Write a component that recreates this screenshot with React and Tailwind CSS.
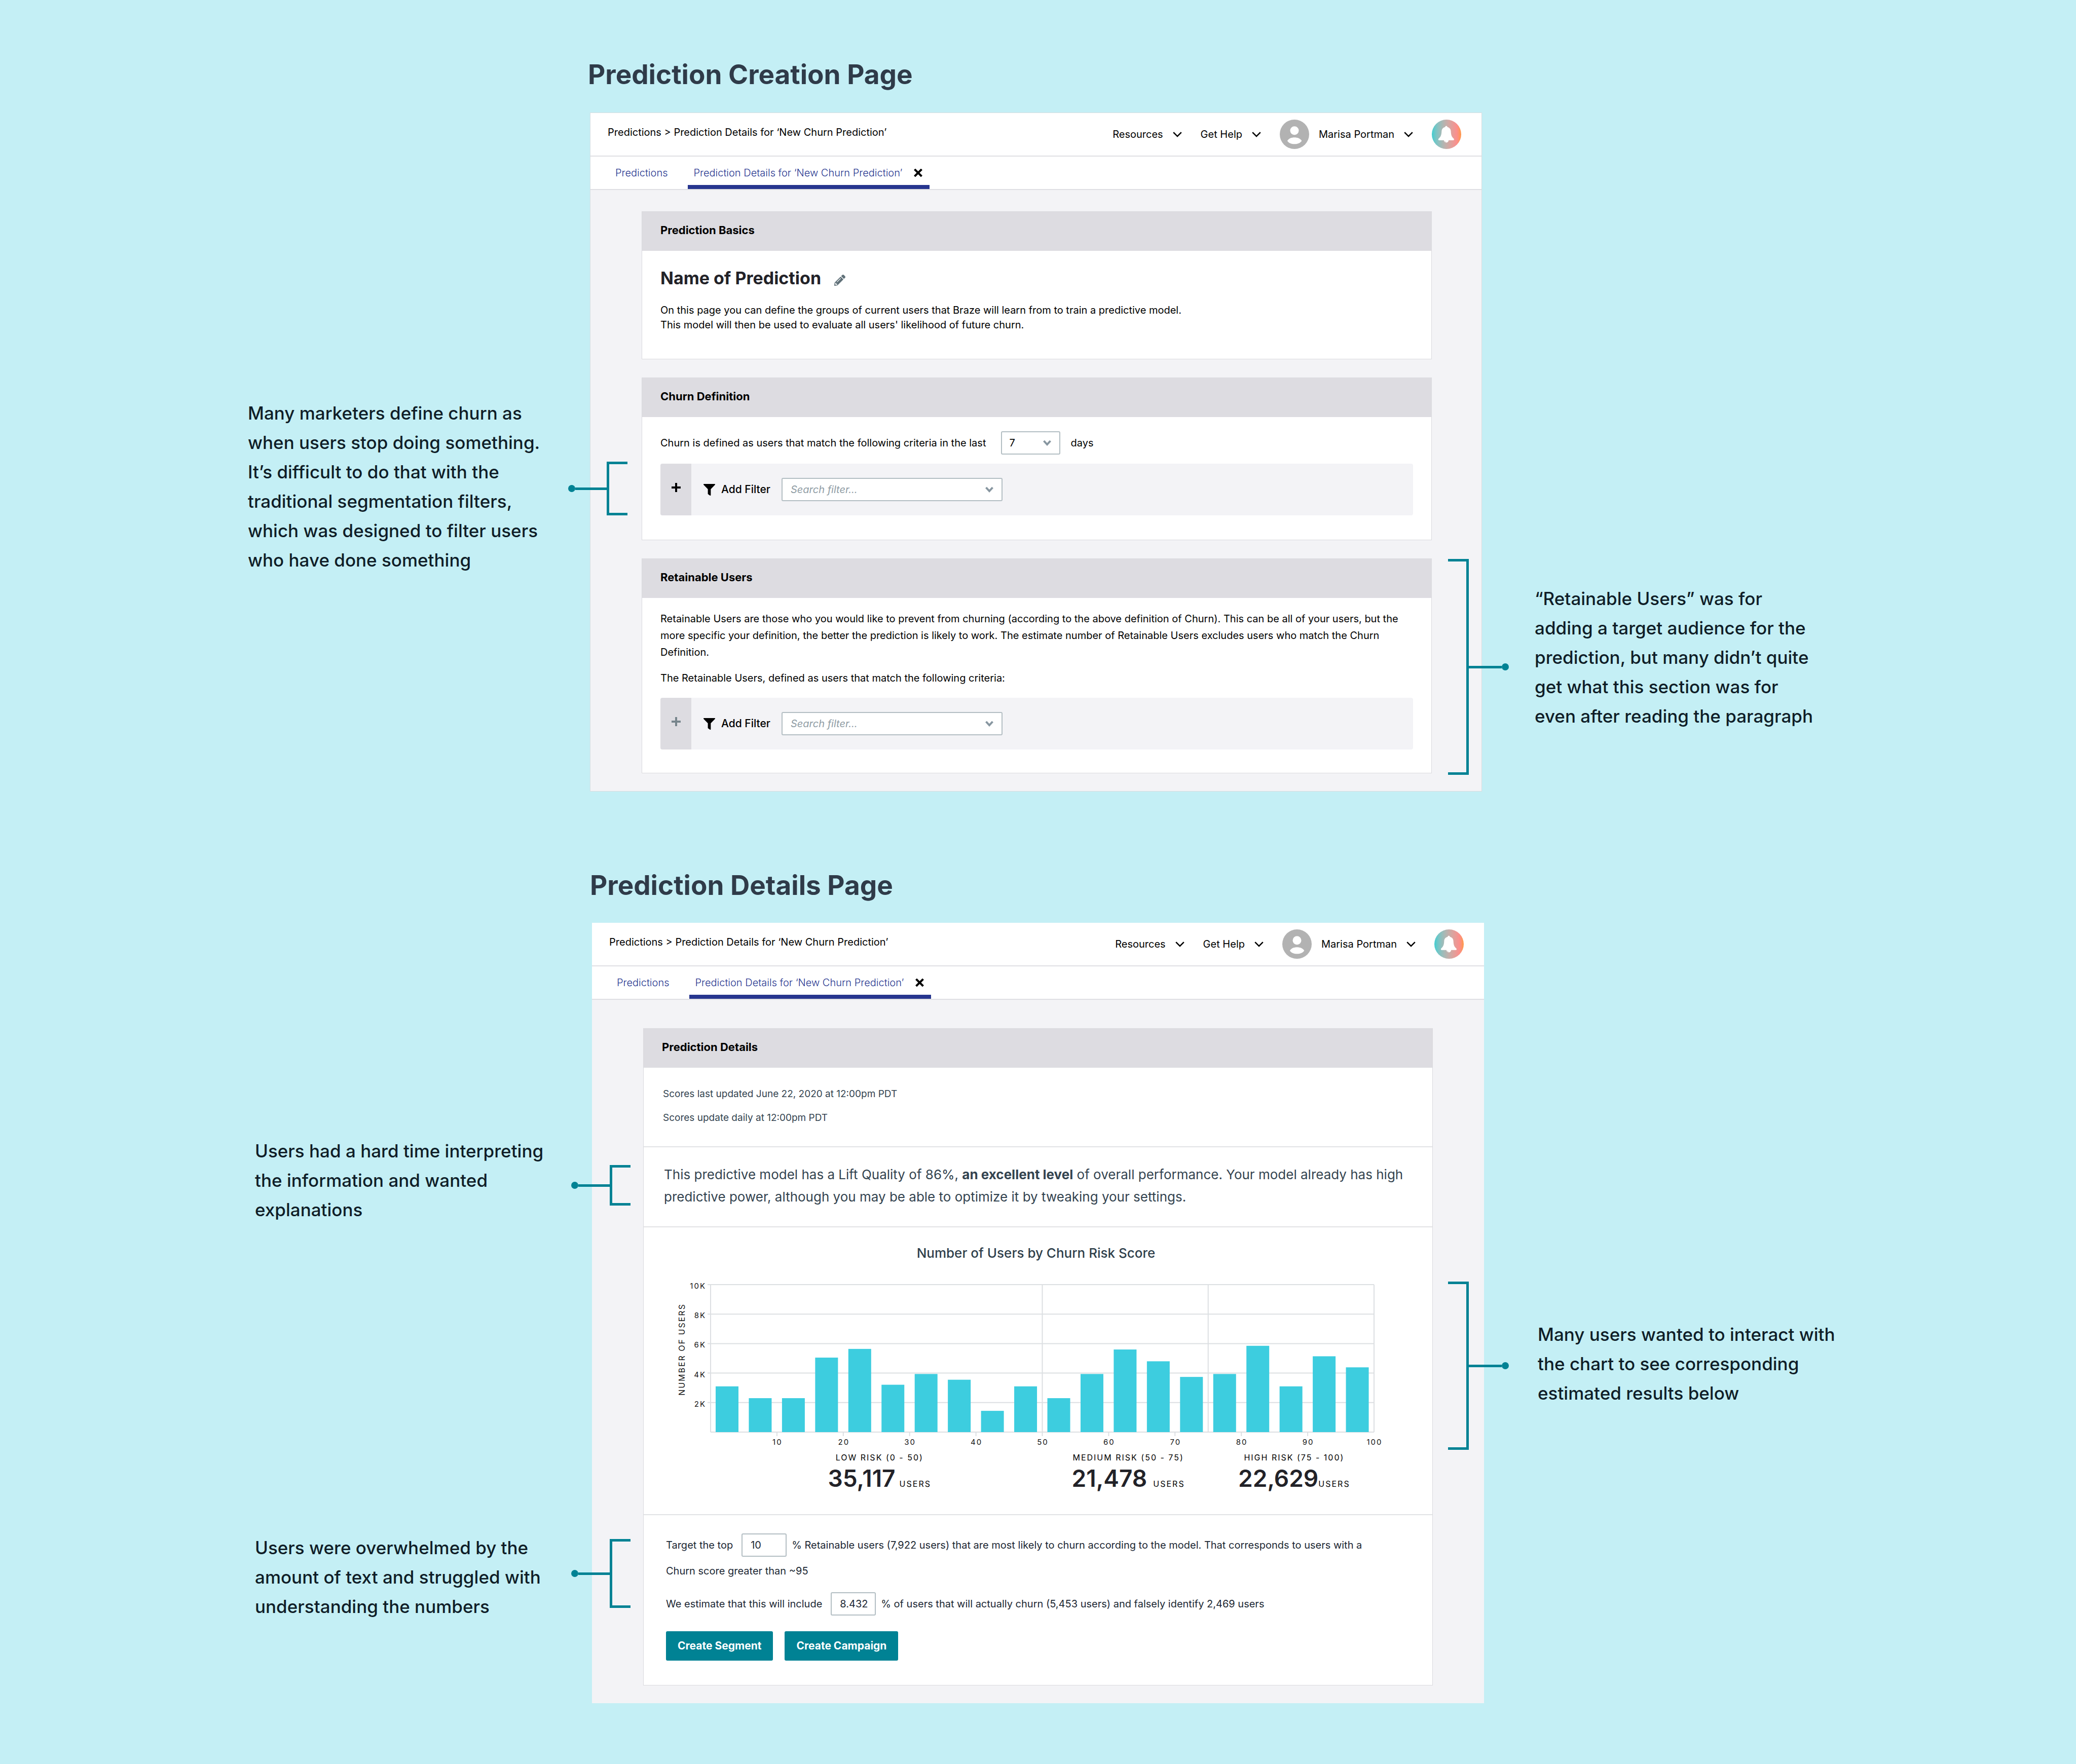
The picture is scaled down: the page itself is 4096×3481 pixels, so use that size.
import React from "react";
import { FaFilter, FaPencilAlt } from "react-icons/fa";

function ThinChevron() {
  return (
    <svg viewBox="0 0 18 11" className="w-[18px] h-[11px]" fill="none" stroke="#000" strokeWidth="2.6" aria-hidden="true">
      <path d="M1.2 1.2 9 9 16.8 1.2" />
    </svg>
  );
}

function FieldChevron() {
  return (
    <svg viewBox="0 0 16 12" className="w-4 h-3" fill="none" stroke="#8796a0" strokeWidth="4" aria-hidden="true">
      <path d="M1.5 2 8 9 14.5 2" />
    </svg>
  );
}

function Avatar() {
  return (
    <svg viewBox="0 0 60 60" className="w-[58px] h-[58px]" aria-hidden="true">
      <circle cx="30" cy="30" r="30" fill="#b2b2b2" />
      <circle cx="30" cy="22.5" r="8.8" fill="#fff" />
      <path fill="#fff" d="M15.5 43.5C18 38.5 24 36.5 30 36.5s12 2 14.8 7C42 48 36 50 30 50s-12-2-14.5-6.500z" />
    </svg>
  );
}

function BellIcon() {
  return (
    <svg viewBox="0 0 60 60" className="w-[58px] h-[58px] rounded-full bg-linear-to-r from-[#3acdd0] via-[#fb8e8c] via-85% to-[#ff9740]" aria-hidden="true">
      <path
        fill="#fff"
        d="M29.500 13c1.400 0 2.300 1 2.300 2.200 4.800 1 6.900 4.300 7.100 9 .3 7 1.600 11 5.800 14.500 1.300 1.200.8 3.500-1 3.500H34.300a4.800 4.800 0 0 1-9.600 0H15c-1.800 0-2.300-2.300-1-3.500 4.200-3.500 5.700-7.500 6-14.500.2-4.700 2.400-8 7.200-9 0-1.200.9-2.200 2.300-2.200z"
      />
      <path d="M26.500 43.500a3.200 3.200 0 0 0 3 3" fill="none" stroke="#c9b5b5" strokeWidth="0.7" />
    </svg>
  );
}

function Bracket({ side, className }) {
  const left = side === "left";
  return (
    <div
      aria-hidden="true"
      className={`absolute w-[41px] border-y-[5px] border-[#008294] ${left ? "border-l-[5px]" : "border-r-[5px]"} ${className}`}
    >
      <div
        className={`absolute top-1/2 flex -translate-y-1/2 items-center ${left ? "right-full w-[81px]" : "left-full w-[84px] flex-row-reverse"}`}
      >
        <span className="h-[14px] w-[14px] rounded-full bg-[#008294]" />
        <span className="h-[5px] flex-1 bg-[#008294]" />
      </div>
    </div>
  );
}

function Note({ children }) {
  return <p className="whitespace-pre-line text-[35px] font-medium leading-[58px] text-[#0f1d27]">{children}</p>;
}

function TopBar() {
  return (
    <header>
      <div className="flex h-[86px] items-center justify-between border-b-2 border-[#dfdfe3] bg-white pl-[34px] pr-10">
        <nav aria-label="Breadcrumb" className="pb-2">
          Predictions &gt; Prediction Details for ‘New Churn Prediction’
        </nav>
        <div className="flex items-center gap-[37px]">
          <button type="button" className="flex items-center gap-[19px]">
            Resources <ThinChevron />
          </button>
          <button type="button" className="flex items-center gap-[19px]">
            Get Help <ThinChevron />
          </button>
          <button type="button" className="flex items-center gap-[19px]">
            <Avatar />
            Marisa Portman <ThinChevron />
          </button>
          <button type="button" aria-label="Notifications">
            <BellIcon />
          </button>
        </div>
      </div>
      <div className="flex h-[66px] items-stretch gap-10 border-b-2 border-[#dfdfe3] bg-white pl-[49px] font-light text-[#27368f]">
        <a href="#predictions" className="flex items-center">Predictions</a>
        <div className="flex items-center gap-[23px] pl-[11px] pr-[14px] shadow-[inset_0_-8px_0_#27368f]">
          <a href="#details">Prediction Details for ‘New Churn Prediction’</a>
          <button type="button" aria-label="Close tab">
            <svg viewBox="0 0 17 16" className="h-4 w-[17px]" stroke="#000" strokeWidth="4" fill="none">
              <path d="M1.500 1 15.500 15M15.500 1 1.500 15" />
            </svg>
          </button>
        </div>
      </div>
    </header>
  );
}

function Card({ title, children }) {
  return (
    <section className="relative border border-[#dadade] bg-white">
      <h3 className="flex h-[77px] items-center bg-[#dddce1] px-9 pb-[6px] text-[22px] font-bold">{title}</h3>
      {children}
    </section>
  );
}

function FilterRow({ muted, children }) {
  return (
    <div className="relative flex h-[102px] items-center rounded bg-[#f3f3f6]">
      <button
        type="button"
        aria-label="Add filter group"
        className="flex h-full w-[61px] items-center justify-center rounded-l bg-[#dddce1] pb-2"
      >
        <svg viewBox="0 0 18 18" className="h-[18px] w-[18px]" stroke={muted ? "#77858c" : "#000"} strokeWidth="4">
          <path d="M9 0v18M0 9h18" />
        </svg>
      </button>
      <label className="flex items-center">
        <FaFilter className="ml-6 h-[23px] w-[23px]" />
        <span className="ml-3 mr-[22px] text-[21px] font-medium">Add Filter</span>
        <span className="flex h-[46px] w-[436px] items-center rounded-[3px] border-2 border-[#b3bec3] bg-white pl-4 pr-4">
          <input
            type="text"
            placeholder="Search filter..."
            className="min-w-0 flex-1 italic outline-none placeholder:text-[#8f9ca4]"
          />
          <FieldChevron />
        </span>
      </label>
      {children}
    </div>
  );
}

const BARS = [3.1, 2.3, 2.3, 5.05, 5.64, 3.21, 3.94, 3.55, 1.44, 3.1, 2.3, 3.94, 5.6, 4.8, 3.74, 3.94, 5.85, 3.1, 5.14, 4.39];
const PLOT = { x: 132, y: 15, w: 1309, h: 291 };

function Chart() {
  const right = PLOT.x + PLOT.w;
  const bottom = PLOT.y + PLOT.h;
  return (
    <svg viewBox="0 0 1556 336" className="mt-[27px] block w-full" role="img" aria-label="Number of users by churn risk score">
      <g stroke="#dcdfe2" strokeWidth="2">
        {[0, 2, 4, 6, 8, 10].map((k) => (
          <line key={k} x1={k ? PLOT.x - 6 : PLOT.x} x2={right} y1={bottom - k * 29.1} y2={bottom - k * 29.1} />
        ))}
        {[0, 50, 75, 100].map((v) => (
          <line key={v} x1={PLOT.x + v * 13.09} x2={PLOT.x + v * 13.09} y1={PLOT.y} y2={bottom} />
        ))}
        {[10, 20, 30, 40, 50, 60, 70, 80, 90].map((v) => (
          <line key={v} x1={PLOT.x + v * 13.09} x2={PLOT.x + v * 13.09} y1={bottom} y2={bottom + 8} />
        ))}
      </g>
      {BARS.map((v, i) => (
        <rect key={i} x={PLOT.x + 10 + i * 65.45} y={bottom - v * 29.1} width="45" height={v * 29.1} fill="#3dcddf" />
      ))}
      <g fontSize="15" letterSpacing="2" fill="#111">
        {[2, 4, 6, 8, 10].map((k) => (
          <text key={k} x={PLOT.x - 9} y={bottom - k * 29.1 + 8} textAnchor="end">{k}K</text>
        ))}
        {[10, 20, 30, 40, 50, 60, 70, 80, 90, 100].map((v) => (
          <text key={v} x={PLOT.x + v * 13.09 + 1} y={bottom + 25} textAnchor="middle">{v}</text>
        ))}
      </g>
      <text transform="translate(81 143) rotate(-90)" fontSize="16" letterSpacing="2" textAnchor="middle" fill="#111">
        NUMBER OF USERS
      </text>
    </svg>
  );
}

function Risk({ label, value, gap }) {
  return (
    <div className="flex flex-col items-center pl-3">
      <div className="text-[16px] leading-6 tracking-[2px]">{label}</div>
      <div className={`mt-[6px] flex items-baseline ${gap}`}>
        <span className="text-[46px] font-semibold leading-[46px] text-[#222228]">{value}</span>
        <span className="text-[16px] leading-6 tracking-[2px]">USERS</span>
      </div>
    </div>
  );
}

const numberInput = "ml-[17px] mr-[10px] h-[46px] w-[89px] rounded-[3px] border-2 border-[#b3bec3] bg-white pl-4";
const action = "h-[58px] rounded-[3px] bg-[#008294] px-[23px] text-[21px] font-bold text-white";

function CreationPage() {
  return (
    <div>
      <h2 className="-ml-1 text-[53px] font-bold leading-[64px] text-[#2f3b49]">Prediction Creation Page</h2>
      <article className="mt-[43px] border border-[#d8dde0] bg-[#f3f3f6]">
        <TopBar />
        <div className="flex flex-col gap-9 pb-[35px] pl-[101px] pr-[98px] pt-[42px]">
          <Card title="Prediction Basics">
            <div className="px-9 pb-[52px] pt-[34px]">
              <div className="flex items-center gap-[26px]">
                <h4 className="text-[34px] font-bold leading-10 text-[#222228]">Name of Prediction</h4>
                <button type="button" aria-label="Edit name" className="pt-2">
                  <FaPencilAlt className="h-[22px] w-[22px] text-[#5f7078]" />
                </button>
              </div>
              <p className="mt-[29px] leading-[29px]">
                On this page you can define the groups of current users that Braze will learn from to train a predictive model.
                <br />
                This model will then be used to evaluate all users' likelihood of future churn.
              </p>
            </div>
          </Card>
          <Card title="Churn Definition">
            <div className="px-9 pb-12 pt-7">
              <label className="mb-[18px] flex items-center">
                Churn is defined as users that match the following criteria in the last
                <span className="relative ml-[30px] mr-5 flex items-center">
                  <select defaultValue="7" className="h-[46px] w-[117px] appearance-none rounded-[3px] border-2 border-[#b3bec3] bg-white pl-[14px]">
                    <option>7</option>
                    <option>14</option>
                    <option>30</option>
                  </select>
                  <span className="pointer-events-none absolute right-[18px]"><FieldChevron /></span>
                </span>
                days
              </label>
              <FilterRow>
                <Bracket side="left" className="-top-1 bottom-0 right-full mr-[65px]" />
              </FilterRow>
            </div>
          </Card>
          <Card title="Retainable Users">
            <div className="px-9 pb-[46px] pt-[25px]">
              <p className="leading-[33px]">
                Retainable Users are those who you would like to prevent from churning (according to the above definition of
                Churn). This can be all of your users, but the more specific your definition, the better the prediction is
                likely to work. The estimate number of Retainable Users excludes users who match the Churn Definition.
              </p>
              <p className="mb-[22px] mt-[18px] leading-[33px]">
                The Retainable Users, defined as users that match the following criteria:
              </p>
              <FilterRow muted />
            </div>
            <Bracket side="right" className="-bottom-1 left-full top-0 ml-[33px]" />
          </Card>
        </div>
      </article>
    </div>
  );
}

function DetailsPage() {
  return (
    <div>
      <h2 className="-ml-1 text-[53px] font-bold leading-[64px] text-[#2f3b49]">Prediction Details Page</h2>
      <article className="mt-[42px] bg-[#f3f3f6]">
        <TopBar />
        <div className="px-[101px] pb-[35px] pt-14">
          <Card title="Prediction Details">
            <div className="border-b-2 border-[#e1e2e5] pb-[33px] pl-[38px] pr-9 pt-[28px] text-[19px] leading-[47px] text-[#33434f]">
              <p>Scores last updated June 22, 2020 at 12:00pm PDT</p>
              <p>Scores update daily at 12:00pm PDT</p>
            </div>
            <div className="relative border-b-2 border-[#e1e2e5] pb-9 pl-10 pr-9 pt-8 text-[26px] leading-[44px] text-[#33434f]">
              <p>
                This predictive model has a Lift Quality of 86%, <b>an excellent level</b> of overall performance. Your model
                already has high predictive power, although you may be able to optimize it by tweaking your settings.
              </p>
              <Bracket side="left" className="bottom-[41px] right-full top-[35px] mr-[26px]" />
            </div>
            <div className="relative border-b-2 border-[#e1e2e5] pb-12 pt-[31px]">
              <h4 className="pr-2 text-center text-[26px] font-medium leading-10 text-[#2f3f4b]">
                Number of Users by Churn Risk Score
              </h4>
              <Chart />
              <div className="ml-[132px] mr-[115px] mt-2 grid grid-cols-[2fr_1fr_1fr]">
                <Risk label="LOW RISK (0 - 50)" value="35,117" gap="gap-2" />
                <Risk label="MEDIUM RISK (50 - 75)" value="21,478" gap="gap-3" />
                <Risk label="HIGH RISK (75 - 100)" value="22,629" gap="gap-0" />
              </div>
              <Bracket side="right" className="bottom-[127px] left-full top-[107px] ml-[31px]" />
            </div>
            <div className="relative pb-[48px] pl-[44px] pr-9 pt-9 text-[#1b2733]">
              <label className="flex items-center whitespace-nowrap">
                Target the top
                <input type="text" defaultValue="10" className={numberInput} />
                % Retainable users (7,922 users) that are most likely to churn according to the model. That corresponds to users with a
              </label>
              <p className="mt-[11px] leading-[34px]">Churn score greater than ~95</p>
              <label className="mt-[25px] flex items-center whitespace-nowrap">
                We estimate that this will include
                <input type="text" defaultValue="8.432" className={numberInput} />
                % of users that will actually churn (5,453 users) and falsely identify 2,469 users
              </label>
              <div className="mt-[31px] flex gap-[23px]">
                <button type="button" className={action}>Create Segment</button>
                <button type="button" className={action}>Create Campaign</button>
              </div>
              <Bracket side="left" className="right-full top-[47px] mr-[26px] h-[136px]" />
            </div>
          </Card>
        </div>
      </article>
    </div>
  );
}

export default function App() {
  return (
    <main className="flex min-h-screen flex-col gap-[153px] bg-[#c4eff5] pb-[115px] pt-[115px] font-['Inter',sans-serif] text-[20px] leading-6 text-black">
      <div className="grid grid-cols-[1164fr_1760fr_1172fr]">
        <aside className="pl-[489px] pt-[671px]">
          <Note>{"Many marketers define churn as\nwhen users stop doing something.\nIt’s difficult to do that with the\ntraditional segmentation filters,\nwhich was designed to filter users\nwho have done something"}</Note>
        </aside>
        <CreationPage />
        <aside className="pl-[104px] pt-[1037px]">
          <Note>{"“Retainable Users” was for\nadding a target audience for the\nprediction, but many didn’t quite\nget what this section was for\neven after reading the paragraph"}</Note>
        </aside>
      </div>
      <div className="grid grid-cols-[1168fr_1760fr_1168fr]">
        <aside className="flex flex-col gap-[609px] pl-[503px] pt-[527px]">
          <Note>{"Users had a hard time interpreting\nthe information and wanted\nexplanations"}</Note>
          <Note>{"Users were overwhelmed by the\namount of text and struggled with\nunderstanding the numbers"}</Note>
        </aside>
        <DetailsPage />
        <aside className="pl-[106px] pt-[889px]">
          <Note>{"Many users wanted to interact with\nthe chart to see corresponding\nestimated results below"}</Note>
        </aside>
      </div>
    </main>
  );
}
